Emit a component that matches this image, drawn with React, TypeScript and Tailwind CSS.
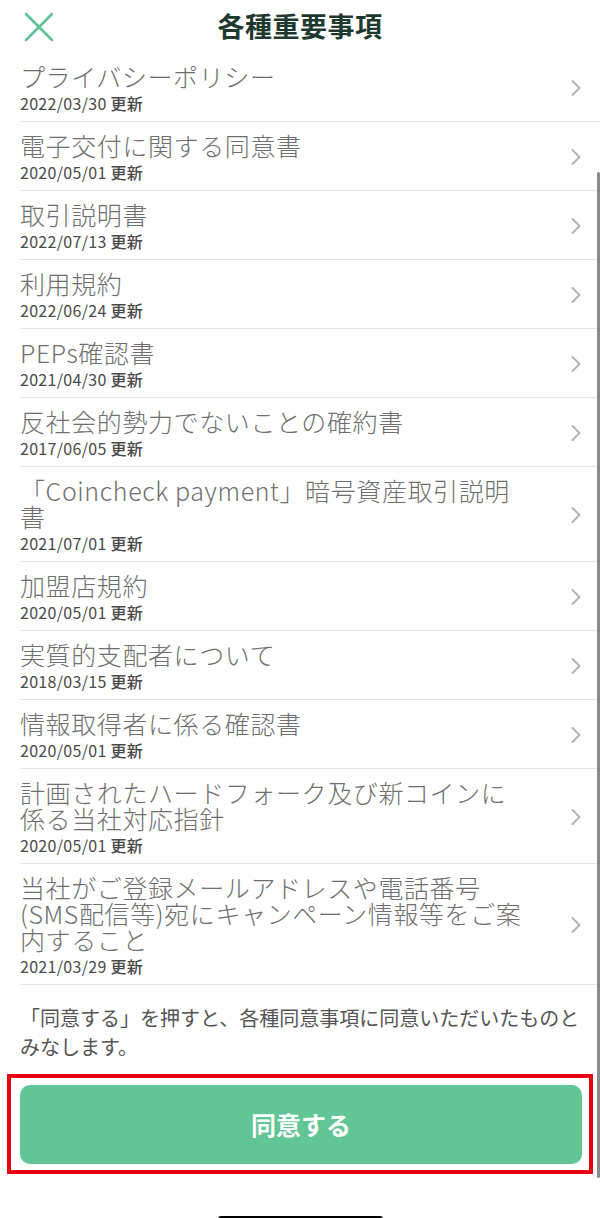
import React from "react";

// ─── Document list ────────────────────────────────────────
type Doc = { lines: string[]; date: string };

const DOCS: Doc[] = [
  { lines: ["プライバシーポリシー"], date: "2022/03/30" },
  { lines: ["電子交付に関する同意書"], date: "2020/05/01" },
  { lines: ["取引説明書"], date: "2022/07/13" },
  { lines: ["利用規約"], date: "2022/06/24" },
  { lines: ["PEPs確認書"], date: "2021/04/30" },
  { lines: ["反社会的勢力でないことの確約書"], date: "2017/06/05" },
  { lines: ["「Coincheck payment」暗号資産取引説明", "書"], date: "2021/07/01" },
  { lines: ["加盟店規約"], date: "2020/05/01" },
  { lines: ["実質的支配者について"], date: "2018/03/15" },
  { lines: ["情報取得者に係る確認書"], date: "2020/05/01" },
  { lines: ["計画されたハードフォーク及び新コインに", "係る当社対応指針"], date: "2020/05/01" },
  {
    lines: [
      "当社がご登録メールアドレスや電話番号",
      "(SMS配信等)宛にキャンペーン情報等をご案",
      "内すること",
    ],
    date: "2021/03/29",
  },
];

const FONT = "font-['Noto_Sans_CJK_JP','Noto_Sans',sans-serif]";

function Chevron() {
  return (
    <svg width="12" height="18" viewBox="0 0 12 18" fill="none">
      <path d="M2.5 2 L9.5 9 L2.5 16" stroke="#b3b3b3" strokeWidth="2" strokeLinecap="round" strokeLinejoin="round" />
    </svg>
  );
}

function DocRow({ doc }: { doc: Doc }) {
  return (
    <div className="ml-[20px] flex items-center border-b border-[#e6e6e6] pt-[10px] pb-[9px]">
      <div className="flex-1 min-w-0">
        <div className="text-[25px] leading-[26px] font-light text-[#6f6f6f] whitespace-nowrap tracking-[0.6px]">
          {doc.lines.map((l, i) => (
            <div key={i}>{l}</div>
          ))}
        </div>
        <div className="mt-[5px] text-[16px] leading-[18px] text-[#4a4a4a] tracking-[0.3px]">
          {doc.date} <span className="font-medium">更新</span>
        </div>
      </div>
      <div className="w-[30px] pr-[18px] flex justify-end shrink-0">
        <Chevron />
      </div>
    </div>
  );
}

export default function App() {
  return (
    <div className={`relative h-[1218px] w-[600px] overflow-hidden bg-white ${FONT}`}>
      {/* Header */}
      <div className="relative flex h-[53px] items-center justify-center">
        <svg className="absolute left-[24px] top-[12px]" width="30" height="30" viewBox="0 0 30 30">
          <path d="M2 2 L28 28 M28 2 L2 28" stroke="#5ec394" strokeWidth="2.6" strokeLinecap="round" />
        </svg>
        <h1 className="text-[27px] font-bold text-[#1e3a2e] tracking-[0.5px]">各種重要事項</h1>
      </div>

      {/* List */}
      <div>
        {DOCS.map((d, i) => (
          <DocRow key={i} doc={d} />
        ))}
      </div>

      {/* Notice */}
      <p className="px-[20px] pt-[18px] text-[20px] leading-[29px] text-[#555]">
        「同意する」を押すと、各種同意事項に同意いただいたものと
        <br />
        みなします。
      </p>

      {/* Agree button (highlighted) */}
      <div className="mx-[7px] mt-[13px] border-[4px] border-[#e60012] pl-[9px] pr-[7px] pt-[7px] pb-[6px]">
        <button className="flex h-[79px] w-full items-center justify-center rounded-[10px] bg-[#62c596] text-[25px] font-bold text-white">
          同意する
        </button>
      </div>

      {/* Home indicator */}
      <div className="mt-[42px] flex justify-center">
        <div className="h-[6px] w-[165px] rounded-full bg-black" />
      </div>

      {/* Scrollbar */}
      <div className="absolute right-0 top-[172px] h-[1006px] w-[3px] rounded-full bg-[#8a8a8a]" />
    </div>
  );
}
